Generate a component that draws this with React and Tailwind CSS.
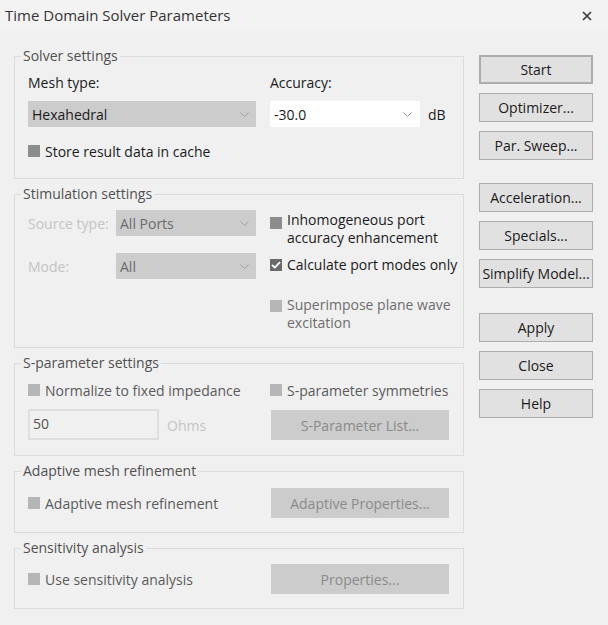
import React from "react";

const font = { fontFamily: '"Open Sans", "Noto Sans", sans-serif' };

function Chevron({ color = "#a3a3a3" }) {
  return (
    <svg width="9" height="5" viewBox="0 0 9 5" fill="none" className="shrink-0">
      <path d="M0.5 0.5L4.5 4.5L8.5 0.5" stroke={color} strokeWidth="1" />
    </svg>
  );
}

function Check({ state = "off" }) {
  // off = enabled unchecked, dis = disabled, on = checked
  if (state === "on") {
    return (
      <span className="w-[12px] h-[12px] bg-[#6b6b6b] flex items-center justify-center shrink-0">
        <svg width="10" height="8" viewBox="0 0 10 8" fill="none">
          <path d="M1 4L3.8 6.6L9 1.2" stroke="#fff" strokeWidth="1.8" />
        </svg>
      </span>
    );
  }
  return (
    <span
      className={
        "block w-[12px] h-[12px] shrink-0 " +
        (state === "dis" ? "bg-[#b6b6b6]" : "bg-[#8c8c8c]")
      }
    />
  );
}

function Group({ title, className = "", children }) {
  return (
    <fieldset className={"border border-[#dcdcdc] min-w-0 " + className}>
      <legend className="ml-[6px] px-[2px] leading-[20px] text-[14px] text-[#505050]">
        {title}
      </legend>
      <div className="pl-[13px] pr-[14px]">{children}</div>
    </fieldset>
  );
}

function SideButton({ children, main }) {
  return (
    <button
      className={
        "w-[114px] h-[29px] bg-[#e1e1e1] text-[14px] text-[#1b1b1b] whitespace-nowrap " +
        (main ? "border-2 border-[#adadad]" : "border border-[#adadad]")
      }
    >
      {children}
    </button>
  );
}

function DisabledButton({ children }) {
  return (
    <button className="w-[178px] h-[30px] bg-[#cccccc] text-[14px] text-[#8a8a8a]">
      {children}
    </button>
  );
}

export default function App() {
  return (
    <div
      style={font}
      className="w-[608px] h-[625px] bg-[#f0f0f0] text-[#1b1b1b] text-[14px] overflow-hidden"
    >
      {/* Title bar */}
      <div className="h-[31px] bg-[#f3f3f3] flex items-center justify-between pl-[5px] pr-[16px]">
        <span className="text-[15px] text-[#333]">Time Domain Solver Parameters</span>
        <svg width="10" height="10" viewBox="0 0 10 10">
          <path d="M1 1L9 9M9 1L1 9" stroke="#3a3a3a" strokeWidth="1.7" />
        </svg>
      </div>

      <div className="flex pl-[14px] pt-[15px]">
        {/* Left column */}
        <div className="w-[450px] flex flex-col">
          <Group title="Solver settings" className="pb-[17px]">
            <div className="grid grid-cols-[228px_1fr] gap-x-[14px] pt-[7px]">
              <div className="leading-[20px]">Mesh type:</div>
              <div className="leading-[20px]">Accuracy:</div>
              <div className="mt-[8px] h-[26px] bg-[#cccccc] flex items-center justify-between pl-[4px] pr-[7px]">
                <span>Hexahedral</span>
                <Chevron />
              </div>
              <div className="mt-[8px] flex items-center gap-[8px]">
                <div className="w-[150px] h-[26px] bg-white flex items-center justify-between pl-[4px] pr-[8px]">
                  <span>-30.0</span>
                  <Chevron color="#999" />
                </div>
                <span>dB</span>
              </div>
            </div>
            <div className="mt-[14px] h-[20px] flex items-center gap-[5px]">
              <Check />
              <span>Store result data in cache</span>
            </div>
          </Group>

          <Group title="Stimulation settings" className="mt-[5px] pb-[15px]">
            <div className="grid grid-cols-[228px_1fr] gap-x-[14px] pt-[6px]">
              <div className="flex flex-col gap-[17px]">
                <div className="flex items-center">
                  <span className="w-[88px] text-[#c4c4c4]">Source type:</span>
                  <div className="flex-1 h-[26px] bg-[#cccccc] flex items-center justify-between pl-[4px] pr-[7px] text-[#6b6b6b]">
                    <span>All Ports</span>
                    <Chevron />
                  </div>
                </div>
                <div className="flex items-center">
                  <span className="w-[88px] text-[#c4c4c4]">Mode:</span>
                  <div className="flex-1 h-[26px] bg-[#cccccc] flex items-center justify-between pl-[4px] pr-[7px] text-[#6b6b6b]">
                    <span>All</span>
                    <Chevron />
                  </div>
                </div>
              </div>
              <div className="flex flex-col pt-[1px] leading-[18px] whitespace-nowrap">
                <div className="flex gap-[5px]">
                  <span className="mt-[6px]"><Check /></span>
                  <span>Inhomogeneous port<br />accuracy enhancement</span>
                </div>
                <div className="flex items-center gap-[5px] mt-[9px]">
                  <Check state="on" />
                  <span>Calculate port modes only</span>
                </div>
                <div className="flex gap-[5px] mt-[22px] text-[#6d6d6d]">
                  <span className="mt-[4px]"><Check state="dis" /></span>
                  <span>Superimpose plane wave<br />excitation</span>
                </div>
              </div>
            </div>
          </Group>

          <Group title="S-parameter settings" className="mt-[5px] pb-[15px]">
            <div className="grid grid-cols-[228px_1fr] gap-x-[15px] pt-[7px] text-[#5a5a5a] whitespace-nowrap">
              <div className="h-[20px] flex items-center gap-[5px]">
                <Check state="dis" />
                <span>Normalize to fixed impedance</span>
              </div>
              <div className="h-[20px] flex items-center gap-[5px] -ml-[1px]">
                <Check state="dis" />
                <span>S-parameter symmetries</span>
              </div>
              <div className="mt-[9px] flex items-center">
                <div className="w-[131px] h-[31px] border-2 border-[#dedede] bg-[#f0f0f0] flex items-start pl-[3px] pt-[2px] text-[#555]">
                  50
                </div>
                <span className="ml-[8px] mt-[2px] text-[#c4c4c4]">Ohms</span>
              </div>
              <div className="mt-[10px]">
                <DisabledButton>S-Parameter List...</DisabledButton>
              </div>
            </div>
          </Group>

          <Group title="Adaptive mesh refinement" className="mt-[5px] pb-[14px]">
            <div className="grid grid-cols-[228px_1fr] gap-x-[15px] pt-[7px] items-center text-[#5a5a5a] whitespace-nowrap">
              <div className="flex items-center gap-[5px]">
                <Check state="dis" />
                <span>Adaptive mesh refinement</span>
              </div>
              <DisabledButton>Adaptive Properties...</DisabledButton>
            </div>
          </Group>

          <Group title="Sensitivity analysis" className="mt-[5px] pb-[14px]">
            <div className="grid grid-cols-[228px_1fr] gap-x-[15px] pt-[6px] items-center text-[#5a5a5a] whitespace-nowrap">
              <div className="flex items-center gap-[5px]">
                <Check state="dis" />
                <span>Use sensitivity analysis</span>
              </div>
              <DisabledButton>Properties...</DisabledButton>
            </div>
          </Group>
        </div>

        {/* Right column */}
        <div className="ml-[15px] pt-[9px] flex flex-col">
          <div className="flex flex-col gap-[9px]">
            <SideButton main>Start</SideButton>
            <SideButton>Optimizer...</SideButton>
            <SideButton>Par. Sweep...</SideButton>
          </div>
          <div className="flex flex-col gap-[9px] mt-[23px]">
            <SideButton>Acceleration...</SideButton>
            <SideButton>Specials...</SideButton>
            <SideButton>Simplify Model...</SideButton>
          </div>
          <div className="flex flex-col gap-[9px] mt-[25px]">
            <SideButton>Apply</SideButton>
            <SideButton>Close</SideButton>
            <SideButton>Help</SideButton>
          </div>
        </div>
      </div>
    </div>
  );
}
